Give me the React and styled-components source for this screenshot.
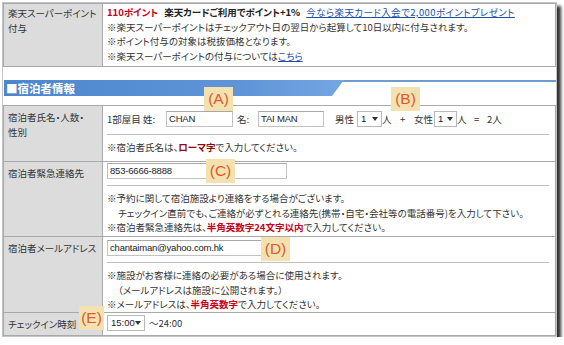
import React from "react";
import styled, { createGlobalStyle } from "styled-components";

const GlobalStyle = createGlobalStyle`
  body {
    margin: 0;
    background: #fff;
  }
`;

const Frame = styled.div`
  position: relative;
  box-sizing: border-box;
  width: 555px;
  height: 335px;
  margin: 2px 0 0 2px;
  border: 1px solid #c4c4c4;
  background: #fff;
  box-shadow: 4px 4px 3px rgba(0, 0, 0, 0.8);
  font-family: "Noto Sans CJK JP", "Noto Sans", sans-serif;
  font-feature-settings: "palt";
  font-size: 9.5px;
  color: #333;
  line-height: 14.5px;
`;

const Table = styled.div`
  box-sizing: border-box;
  width: 553px;
  border: 1px solid #a9a9a9;
  display: flex;
  flex-direction: column;
`;

const Row = styled.div`
  display: flex;
  height: ${(p) => p.$h}px;
  & + & {
    border-top: 1px solid #a9a9a9;
  }
`;

const Label = styled.div`
  box-sizing: border-box;
  width: 99px;
  flex-shrink: 0;
  background: #dcdcdc;
  border-right: 1px solid #a9a9a9;
  padding: ${(p) => p.$pt || 3}px 3px 0 4px;
  white-space: nowrap;
`;

const Cell = styled.div`
  flex: 1;
  padding: ${(p) => p.$pt || 3}px 3px 0 4px;
  display: flex;
  flex-direction: column;
`;

const Line = styled.div`
  display: flex;
  align-items: center;
  white-space: nowrap;
  gap: ${(p) => p.$gap || 0}px;
`;

const Indent = styled.div`
  padding-left: 11px;
  white-space: nowrap;
`;

const Red = styled.span`
  color: ${(p) => (p.$dark ? "#8f0a0a" : "#c8001a")};
  font-weight: bold;
`;

const Bold = styled.span`
  font-weight: bold;
  color: #222;
`;

const Link = styled.a`
  color: #1e4fa8;
  text-decoration: underline;
  letter-spacing: ${(p) => p.$ls || 0}px;
`;

const Divider = styled.div`
  height: 0;
  border-top: 1px solid #bdbdbd;
  margin: ${(p) => p.$m || "7px 3px 5px 0"};
`;

const Field = styled.div`
  box-sizing: border-box;
  flex-shrink: 0;
  width: ${(p) => p.$w}px;
  height: 16px;
  border: 1px solid #c2c2c2;
  border-top-color: #a8a8a8;
  background: #fff;
  font-family: "Liberation Sans", Arial, sans-serif;
  font-size: 9.5px;
  line-height: 14px;
  padding-left: 2px;
  color: #222;
  letter-spacing: -0.2px;
`;

const Select = styled.div`
  box-sizing: border-box;
  flex-shrink: 0;
  width: ${(p) => p.$w}px;
  height: 16px;
  border: 1px solid #b8b8b8;
  background: #fff;
  font-family: "Liberation Sans", Arial, sans-serif;
  font-size: 9.5px;
  line-height: 14px;
  padding: 0 2px 0 3px;
  display: flex;
  justify-content: space-between;
  align-items: center;
  color: #222;
  &::after {
    content: "";
    border-left: 3px solid transparent;
    border-right: 3px solid transparent;
    border-top: 4px solid #333;
    margin-right: 1px;
  }
`;

const Txt = styled.span`
  flex-shrink: 0;
  width: ${(p) => (p.$w ? `${p.$w}px` : "auto")};
  margin: ${(p) => p.$m || "0"};
`;

const Header = styled.div`
  display: flex;
  align-items: flex-start;
  margin: 13px 0 9px 1px;
`;

const HeaderTab = styled.div`
  width: 340px;
  height: 16px;
  background: linear-gradient(to right, #4c86cc, #5f95d8 70%, #74a6e2);
  clip-path: polygon(0 0, 100% 0, calc(100% - 12px) 100%, 0 100%);
  color: #fff;
  font-weight: bold;
  font-size: 11.5px;
  line-height: 16px;
  padding-left: 2px;
  box-sizing: border-box;
  white-space: nowrap;
`;

const HeaderLine = styled.div`
  flex: 1;
  height: 2px;
  background: #6f9dd2;
  margin-left: -12px;
`;

const Marker = styled.div`
  position: absolute;
  left: ${(p) => p.$x}px;
  top: ${(p) => p.$y}px;
  width: ${(p) => p.$w || 29}px;
  height: 24px;
  background: #f3e2b0;
  color: #e0592b;
  font-family: "Liberation Sans", Arial, sans-serif;
  font-size: 15.5px;
  line-height: 24px;
  text-align: center;
`;

export default function App() {
  return (
    <>
      <GlobalStyle />
      <Frame>
        <Table>
          <Row $h={62}>
            <Label $pt={2}>
              楽天スーパーポイント
              <br />
              付与
            </Label>
            <Cell $pt={1}>
              <Line $gap={6}>
                <Red>110ポイント</Red>
                <Bold>楽天カードご利用でポイント+1%</Bold>
                <Link $ls={0.4}>今なら楽天カード入会で2,000ポイントプレゼント</Link>
              </Line>
              <div>※楽天スーパーポイントはチェックアウト日の翌日から起算して10日以内に付与されます。</div>
              <div>※ポイント付与の対象は税抜価格となります。</div>
              <div>
                ※楽天スーパーポイントの付与については<Link>こちら</Link>
              </div>
            </Cell>
          </Row>
        </Table>

        <Header>
          <HeaderTab>■宿泊者情報</HeaderTab>
          <HeaderLine />
        </Header>

        <Table>
          <Row $h={55}>
            <Label $pt={4}>
              宿泊者氏名・人数・
              <br />
              性別
            </Label>
            <Cell $pt={5}>
              <Line>
                <Txt $w={59}>1部屋目 姓:</Txt>
                <Field $w={67}>CHAN</Field>
                <Txt $w={21} $m="0 0 0 4px">名:</Txt>
                <Field $w={66}>TAI MAN</Field>
                <Txt $w={22} $m="0 0 0 11px">男性</Txt>
                <Select $w={25}>1</Select>
                <Txt $w={12}>人</Txt>
                <Txt $w={10} $m="0 0 0 6px">+</Txt>
                <Txt $w={20} $m="0 0 0 4px">女性</Txt>
                <Select $w={23}>1</Select>
                <Txt $w={12}>人</Txt>
                <Txt $w={10} $m="0 0 0 5px">=</Txt>
                <Txt $m="0 0 0 3px">2人</Txt>
              </Line>
              <Divider $m="7px 3px 5px 0" />
              <div>
                ※宿泊者氏名は、<Red $dark>ローマ字</Red>で入力してください。
              </div>
            </Cell>
          </Row>

          <Row $h={74}>
            <Label $pt={4}>宿泊者緊急連絡先</Label>
            <Cell $pt={1}>
              <Field $w={180}>853-6666-8888</Field>
              <Divider $m="6px 3px 5px 0" />
              <div>※予約に関して宿泊施設より連絡をする場合がございます。</div>
              <Indent>
                チェックイン直前でも、ご連絡が必ずとれる連絡先(携帯・自宅・会社等の電話番号)を入力して下さい。
              </Indent>
              <div>
                ※宿泊者緊急連絡先は、<Red>半角英数字24文字以内</Red>で入力してください。
              </div>
            </Cell>
          </Row>

          <Row $h={75}>
            <Label $pt={4}>宿泊者メールアドレス</Label>
            <Cell $pt={3}>
              <Field $w={180}>chantaiman@yahoo.com.hk</Field>
              <Divider $m="6px 3px 5px 0" />
              <div>※施設がお客様に連絡の必要がある場合に使用されます。</div>
              <Indent>（メールアドレスは施設に公開されます。）</Indent>
              <div>
                ※メールアドレスは、<Red>半角英数字</Red>で入力してください。
              </div>
            </Cell>
          </Row>

          <Row $h={22}>
            <Label $pt={4}>チェックイン時刻</Label>
            <Cell $pt={2}>
              <Line $gap={4}>
                <Select $w={38}>15:00</Select>
                <Txt>〜24:00</Txt>
              </Line>
            </Cell>
          </Row>
        </Table>

        <Marker $x={201} $y={84}>(A)</Marker>
        <Marker $x={388} $y={84}>(B)</Marker>
        <Marker $x={203} $y={156}>(C)</Marker>
        <Marker $x={258} $y={234}>(D)</Marker>
        <Marker $x={76} $y={303} $w={25}>(E)</Marker>
      </Frame>
    </>
  );
}
